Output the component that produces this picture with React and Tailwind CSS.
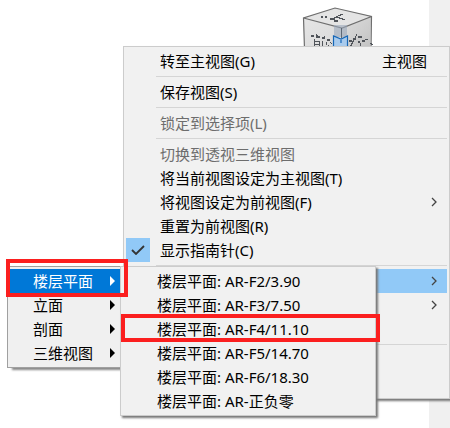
import { useState } from "react";

const FLOORS = [
  "楼层平面: AR-F2/3.90",
  "楼层平面: AR-F3/7.50",
  "楼层平面: AR-F4/11.10",
  "楼层平面: AR-F5/14.70",
  "楼层平面: AR-F6/18.30",
  "楼层平面: AR-正负零",
];

const VIEW_TYPES = ["楼层平面", "立面", "剖面", "三维视图"];

function ViewCube() {
  return (
    <svg width="82" height="44" viewBox="0 0 82 44" aria-hidden="true">
      <defs>
        <linearGradient id="left" x1="0" y1="0" x2="1" y2="1">
          <stop offset="0" stopColor="#e6e6e6" />
          <stop offset="1" stopColor="#d8d8d8" />
        </linearGradient>
        <linearGradient id="right" x1="0" y1="0" x2="1" y2="1">
          <stop offset="0" stopColor="#dedede" />
          <stop offset="1" stopColor="#c2c2c2" />
        </linearGradient>
      </defs>
      <polygon points="3,13 35,3 71,11 42,23" fill="#e4e4e4" />
      <polygon points="3,13 42,23 42,44 5,44" fill="url(#left)" />
      <polygon points="71,11 42,23 42,44 70,44" fill="url(#right)" />
      <path d="M4.500 44 L3.500 13 L35 3 L71.500 11.500 L71 44 M3.500 13 L42 23 L71.500 11.500" fill="none" stroke="#6e6e6e" strokeWidth="1.200" />

      {/* face lettering, seen at an angle */}
      <g fill="none" stroke="#50545a" shapeRendering="crispEdges">
        <path d="M43 9 l-5 2 l-5 3 M37 12 l8 3 M30 14 h5 M21 12 h2 M25 12 h2 M34 16 h4" strokeWidth="1.200" />
        <path d="M11 31 h3 M16 32 h4 M22 33 h3 M27 35 h3 M16 29 l2 3 M25 31 l-2 3" strokeWidth="1.200" />
        <path d="M14.500 34 V44 M19.500 36 V44 M15 36 h5 M15 39 h4 M15 42 h4 M22.500 36 v7 M26.500 37 v3 M28 40 v4 M24 41 h3 M30 37 l2 2 M31 42 h2" />
        <path d="M49 36 h3 M53 34 h3 M58 32 h4 M57 29 l-2 4 M54 35 l-4 7 M58 37 h2 M62 36 h3 M60.500 38 v6 M55 43 h3 M63 42 h3 M48 43 h2 M65 35 l3 -1" strokeWidth="1.200" />
        <path d="M70 38 l3 2 M74 41 h2 M71 43 h2 M77 43 h2" />
      </g>

      {/* hovered edge */}
      <rect x="34" y="20" width="13" height="12" fill="#9ba9bb" opacity="0.6" />
      <path d="M34 31 L41 34 L48 31 V44 H34 Z" fill="#a9cbed" />
      <path d="M33.500 44 V31 L41 34 L47.500 31 V44 M41 35 V38" fill="none" stroke="#1667b7" strokeWidth="1.200" />
      <path d="M41.500 23 V33" stroke="#5d6875" />
    </svg>
  );
}

function Chevron() {
  return (
    <svg width="6" height="10" viewBox="0 0 6 10" className="mr-[10px] shrink-0" aria-hidden="true">
      <path d="M1 1 L5 5 L1 9" fill="none" stroke="#444" strokeWidth="1.300" />
    </svg>
  );
}

function Separator() {
  return <li role="separator" className="my-[3px] ml-[30px] h-px bg-[#d5d5d5]" />;
}

function MenuItem({ label, hint, disabled, checked, arrow, active, onClick }) {
  return (
    <li role="none">
      <button
        role={checked === undefined ? "menuitem" : "menuitemcheckbox"}
        aria-checked={checked}
        aria-label={label ? undefined : "视图"}
        disabled={disabled}
        onClick={onClick}
        className={`flex h-6 w-full items-center text-left ${active ? "bg-[#91c9f7]" : ""} ${disabled ? "text-[#6d6d6d]" : "text-black"}`}
      >
        <span className={`mr-[10px] flex size-6 shrink-0 items-center justify-center ${checked ? "bg-[#91c9f7]" : ""}`}>
          {checked && (
            <svg width="14" height="10" viewBox="0 0 14 10" aria-hidden="true">
              <path d="M1 5 L5 9 L13 1" fill="none" stroke="#333" strokeWidth="1.800" />
            </svg>
          )}
        </span>
        <span className="flex-1">{label}</span>
        {hint && <span className="mr-5">{hint}</span>}
        {arrow && <Chevron />}
      </button>
    </li>
  );
}

export default function App() {
  const [compass, setCompass] = useState(true);
  const [viewType, setViewType] = useState("楼层平面");

  return (
    <main className="relative flex min-h-screen justify-end overflow-hidden bg-white font-['Noto_Sans','Noto_Sans_CJK_SC',sans-serif] text-[15px] leading-6 whitespace-nowrap text-black">
      <div className="mr-[47px] pt-[5px]">
        <ViewCube />
      </div>
      <aside className="w-[21px] bg-[#f0f0f0]" />

      {/* Context menu */}
      <ul role="menu" className="absolute top-[46px] right-0 left-[123px] border border-[#ccc] bg-[#f1f1f1] p-[2px] shadow-[2px_2px_2px_#777]">
        <MenuItem label="转至主视图(G)" hint="主视图" />
        <Separator />
        <MenuItem label="保存视图(S)" />
        <Separator />
        <MenuItem label="锁定到选择项(L)" disabled />
        <Separator />
        <MenuItem label="切换到透视三维视图" disabled />
        <MenuItem label="将当前视图设定为主视图(T)" />
        <MenuItem label="将视图设定为前视图(F)" arrow />
        <MenuItem label="重置为前视图(R)" />
        <MenuItem label="显示指南针(C)" checked={compass} onClick={() => setCompass(!compass)} />
        <Separator />
        <MenuItem arrow active />
        <MenuItem arrow />
        <MenuItem />
        <Separator />
        <MenuItem />
        <MenuItem />
      </ul>

      {/* View type submenu */}
      <ul role="menu" className="absolute top-[266px] left-[7px] w-[120px] border border-[#a0a0a0] bg-[#f0f0f0] p-[2px] shadow-[4px_3px_2px_-1px_#888]">
        {VIEW_TYPES.map((name) => (
          <li key={name} role="none">
            <button
              role="menuitem"
              onClick={() => setViewType(name)}
              className={`flex h-6 w-full items-center pr-[9px] pl-[23px] text-left ${viewType === name ? "bg-[#0078d7] text-white" : ""}`}
            >
              <span className="flex-1">{name}</span>
              <svg width="5" height="10" viewBox="0 0 5 10" aria-hidden="true">
                <path d="M0 0 L5 5 L0 10 Z" fill="currentColor" />
              </svg>
            </button>
          </li>
        ))}
      </ul>

      {/* Floor plans */}
      <ul role="menu" className="absolute top-[266px] left-[120px] w-[256px] border border-[#ccc] bg-[#f1f1f1] p-[2px] shadow-[2px_2px_2px_#777]">
        {FLOORS.map((name) => (
          <MenuItem key={name} label={name} />
        ))}
      </ul>

      {/* Callouts */}
      <div className="pointer-events-none absolute top-[259px] left-[6px] h-[38px] w-[122px] border-4 border-[#fb1f1f]" />
      <div className="pointer-events-none absolute top-[314px] left-[121px] h-7 w-[259px] border-4 border-[#fb1f1f]" />
    </main>
  );
}
